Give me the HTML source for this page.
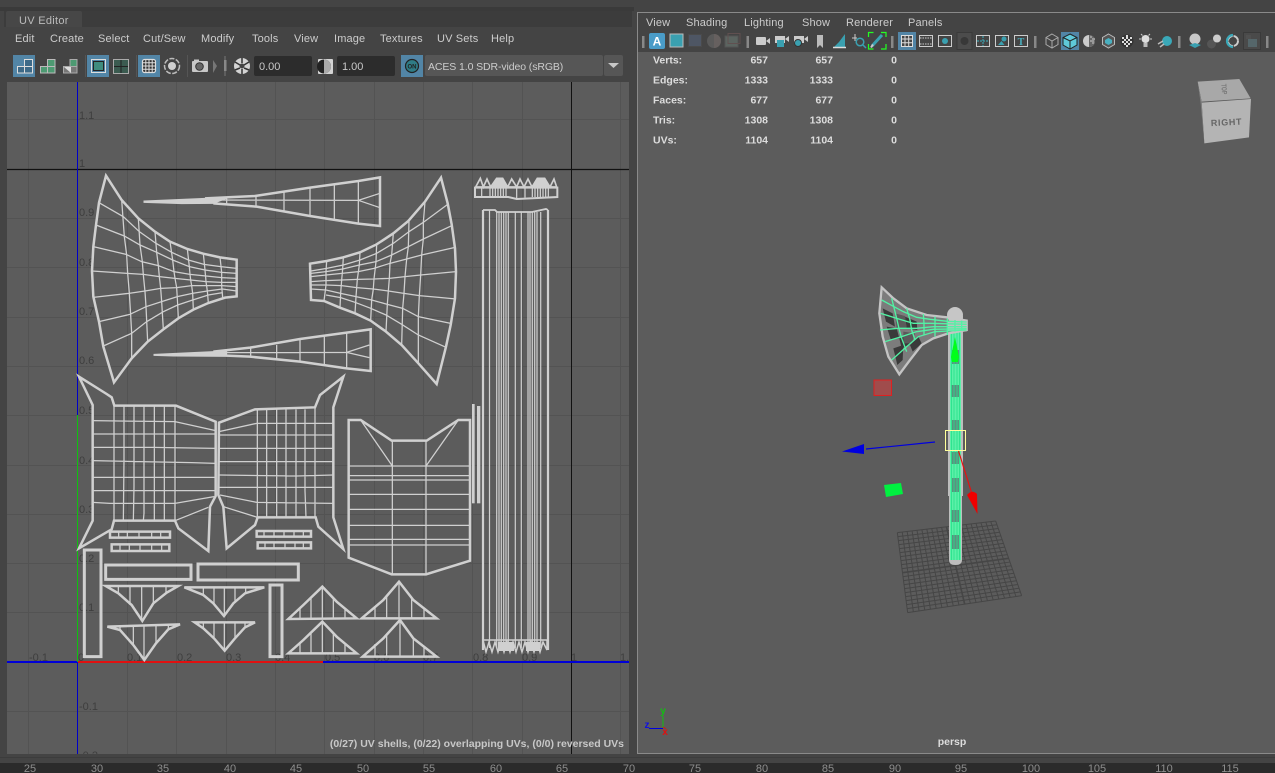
<!DOCTYPE html>
<html><head><meta charset="utf-8"><style>
html,body{margin:0;padding:0;background:#444;width:1275px;height:773px;overflow:hidden}
svg{position:absolute;left:0;top:0;display:block}
text{font-family:"Liberation Sans",sans-serif}
.m{font-size:11px;fill:#ccc;letter-spacing:.15px}
.l{font-size:11px;fill:#3e3e3e}
.h{font-size:10.5px;font-weight:bold;fill:#ddd}
.t{font-size:11px;fill:#8e8e8e;text-anchor:middle}
.o{fill:none;stroke:#d0d0d0;stroke-width:7.500;stroke-linejoin:miter}
.i{fill:none;stroke:#d0d0d0;stroke-width:3.800}
</style></head><body>
<svg width="1275" height="773" viewBox="0 0 1275 773">
<rect width="1275" height="773" fill="#444"/>
<rect x="0" y="7" width="634" height="4" fill="#3a3a3a"/>
<rect x="4" y="11" width="628" height="16" fill="#3c3c3c"/>
<path d="M6 27V13q0-2 2-2h72q2 0 2 2v14z" fill="#474747"/>
<text x="19" y="24" fill="#bbb" letter-spacing=".3" style="font-size:11px">UV Editor</text>
<rect x="4" y="27" width="628" height="55" fill="#444"/>
<g class="menu">
<text class="m" x="15" y="42">Edit</text><text class="m" x="50" y="42">Create</text><text class="m" x="98" y="42">Select</text><text class="m" x="143" y="42">Cut/Sew</text><text class="m" x="201" y="42">Modify</text><text class="m" x="252" y="42">Tools</text><text class="m" x="294" y="42">View</text><text class="m" x="334" y="42">Image</text><text class="m" x="380" y="42">Textures</text><text class="m" x="437" y="42">UV Sets</text><text class="m" x="491" y="42">Help</text>
</g>
<!-- left toolbar -->
<rect x="13" y="55" width="22" height="22" fill="#5285a6"/>
<g fill="#3d6a88" stroke="#ddd"><rect x="24.500" y="59.500" width="8" height="7"/><rect x="17.500" y="66.500" width="7" height="6.500"/><rect x="24.500" y="66.500" width="8" height="6.500"/></g>
<g fill="#4d9a72" stroke="#bbb"><rect x="47.500" y="59.500" width="7.500" height="7"/><rect x="40.500" y="66.500" width="7" height="6.500"/><rect x="47.500" y="66.500" width="7.500" height="6.500"/></g>
<rect x="70" y="59.500" width="7" height="7" fill="#4d9a72" stroke="#aaa"/><rect x="63.500" y="66.500" width="13.500" height="6.500" fill="#777" stroke="#aaa"/><path d="M64 67h7v6z" fill="#ddd"/>
<rect x="85" y="55" width="1" height="22" fill="#555"/>
<rect x="87" y="55" width="22" height="22" fill="#5285a6"/>
<rect x="91.500" y="59.500" width="14" height="13" fill="none" stroke="#ddd"/><rect x="93.500" y="61.500" width="10" height="9" fill="#3f8c7e" stroke="#222"/>
<rect x="113.500" y="59.500" width="15" height="14" fill="#3b5b50" stroke="#aaa"/><path d="M121 60v13M114 66.500h14" stroke="#222"/>
<rect x="136" y="55" width="1" height="22" fill="#555"/>
<rect x="138" y="55" width="22" height="22" fill="#5285a6"/>
<rect x="142.500" y="59.500" width="13" height="13" rx="2" fill="#333" stroke="#ddd" stroke-width="1.200"/><path d="M145.800 59.500v13M149 59.500v13M152.200 59.500v13M142.500 62.800h13M142.500 66h13M142.500 69.200h13" stroke="#ddd"/>
<circle cx="172" cy="66" r="7.500" fill="none" stroke="#bbb" stroke-width="1.500" stroke-dasharray="5 1.500"/><circle cx="172" cy="66" r="4" fill="#d0d0d0"/>
<rect x="187" y="55" width="1" height="22" fill="#555"/>
<rect x="192" y="61" width="16" height="11" rx="1" fill="#c8c8c8"/><rect x="194" y="59.500" width="5" height="2" fill="#c8c8c8"/><circle cx="199.500" cy="66.500" r="3.800" fill="#666" stroke="#333"/>
<path d="M213 60l4 6-4 7z" fill="#777"/>
<rect x="224.500" y="56" width="1" height="20" fill="#777"/><rect x="224" y="60" width="2.500" height="11" fill="#888"/>
<circle cx="242" cy="66" r="8" fill="#d4d4d4"/><path d="M242 58v5M249 62l-5 3M249 70l-5-2M242 74v-5M235 70l5-2M235 62l5 3" stroke="#333" stroke-width="1.500"/><circle cx="242" cy="66" r="2.500" fill="#444"/>
<rect x="254" y="56" width="58" height="20" rx="2" fill="#2c2c2c"/>
<text x="259" y="70" fill="#c8c8c8" style="font-size:11px">0.00</text>
<rect x="318" y="59" width="15" height="15" rx="1" fill="#d4d4d4"/><circle cx="324" cy="66.500" r="7" fill="#222"/><path d="M324 59.500a7 7 0 0 1 0 14z" fill="#aaa"/>
<rect x="337" y="56" width="58" height="20" rx="2" fill="#2c2c2c"/>
<text x="342" y="70" fill="#c8c8c8" style="font-size:11px">1.00</text>
<rect x="401" y="55" width="22" height="22" fill="#5285a6"/>
<circle cx="412" cy="66" r="6.500" fill="#2f7c86" stroke="#222" stroke-width="1.200"/><text x="412" y="68.300" font-weight="bold" fill="#222" text-anchor="middle" style="font-size:6px">ON</text>
<rect x="425" y="55" width="178" height="21" rx="2" fill="#565656"/><rect x="604" y="55" width="19" height="21" rx="2" fill="#565656"/>
<text x="428" y="70" fill="#ccc" style="font-size:10.500px;letter-spacing:-.1px">ACES 1.0 SDR-video (sRGB)</text>
<path d="M608 63h11l-5.500 5z" fill="#c8c8c8"/>

<!-- UV viewport -->
<clipPath id="uv"><rect x="7" y="82" width="622" height="672"/></clipPath>
<rect x="7" y="82" width="622" height="672" fill="#5c5c5c"/>
<g clip-path="url(#uv)">
<path d="M28.500 82V754M127.500 82V754M176.500 82V754M226.500 82V754M275.500 82V754M324.500 82V754M374.500 82V754M423.500 82V754M472.500 82V754M522.500 82V754M620.500 82V754M7 119.500H629M7 218.500H629M7 267.500H629M7 317.500H629M7 366.500H629M7 415.500H629M7 465.500H629M7 514.500H629M7 563.500H629M7 612.500H629M7 711.500H629" stroke="#535353" stroke-width="1" fill="none"/>
<path d="M7 169.500H629" stroke="#111" stroke-width="1.300"/>
<path d="M571.500 82V754" stroke="#111" stroke-width="1"/>
<g class="labels">
<text class="l" x="79" y="119">1.1</text><text class="l" x="79" y="167">1</text><text class="l" x="79" y="216">0.9</text><text class="l" x="79" y="266">0.8</text><text class="l" x="79" y="315">0.7</text><text class="l" x="79" y="364">0.6</text><text class="l" x="79" y="414">0.5</text><text class="l" x="79" y="464">0.4</text><text class="l" x="79" y="513">0.3</text><text class="l" x="79" y="562">0.2</text><text class="l" x="79" y="611">0.1</text><text class="l" x="79" y="710">-0.1</text><text class="l" x="79" y="759">-0.2</text>
<text class="l" x="29" y="661">-0.1</text><text class="l" x="78" y="661">0</text><text class="l" x="127" y="661">0.1</text><text class="l" x="177" y="661">0.2</text><text class="l" x="226" y="661">0.3</text><text class="l" x="275" y="661">0.4</text><text class="l" x="325" y="661">0.5</text><text class="l" x="374" y="661">0.6</text><text class="l" x="423" y="661">0.7</text><text class="l" x="473" y="661">0.8</text><text class="l" x="522" y="661">0.9</text><text class="l" x="571" y="661">1</text><text class="l" x="620" y="661">1.1</text>
</g>
<path d="M7 662H629" stroke="#0000d8" stroke-width="2"/>
<path d="M78 662H323" stroke="#e01010" stroke-width="2"/>
<path d="M77.500 82V415M77.500 663V754" stroke="#0000c8" stroke-width="1"/>
<path d="M77.500 415V662" stroke="#10c010" stroke-width="1"/>
</g>

<!-- left fan, top wedge, bottom wedge -->
<g transform="translate(80,165) scale(.33333)">
<path class="o" d="M78 32L125 105 175 160 225 200 270 230 322 252 370 266 420 277 470 284V394L435 398 385 414 340 434 295 460 250 493 203 530 155 580 102 652 70 545 57 470 40 395 36 318 40 245 48 180 57 113z"/>
<path class="i" d="M57 113L130 155 178 200 228 235 275 262 325 285 372 298 422 305 470 310M48 180L133 213 180 240 230 262 278 285 328 305 375 315 425 322 470 325M40 245L138 268 185 290 235 302 282 320 330 328 378 333 425 338 470 340M36 318L142 325 190 328 238 335 285 340 332 345 378 350 425 352 470 352M40 397L147 385 195 378 242 370 290 368 335 362 380 362 425 362 470 365M57 470L150 448 198 425 245 410 292 395 337 385 382 378 427 372 470 378M70 543L155 505 200 470 250 440 293 420 338 405 385 390 428 383"/>
<path class="i" d="M125 105L133 215 140 270 143 325 148 385 152 450 155 505 155 580M175 160L180 240 187 290 190 330 195 380 198 425 203 530M225 200L230 262 235 302 238 335 242 370 245 410 250 493M270 230L278 285 282 320 285 340 290 368 293 420 295 460M322 252L328 305 330 328 332 345 335 362 338 385 340 434M370 266L375 315 378 350 382 378 385 414M420 277L425 322 425 362 428 398"/>
<path class="o" style="fill:#d0d0d0;stroke-width:3" d="M192 108L375 100 440 100 400 115 305 116 192 112z"/>
<path class="o" d="M375 100L525 93 690 68 835 48 900 37V183L835 176 690 153 530 125 400 115"/>
<path class="i" d="M440 100V115M528 93V125M612 82V140M690 70V155M763 58V163M835 48V178M375 105L835 106 900 85M835 106L900 128"/>
<path class="o" style="fill:#d0d0d0;stroke-width:3" d="M222 568L400 560 440 560V574L280 573 222 571z"/>
<path class="o" d="M400 560L510 548 660 522 800 503 872 493V618L800 610 660 590 510 575 440 572"/>
<path class="i" d="M512 548V575M590 540V585M660 522V590M733 515V603M800 503V612M440 563L800 562 868 540M800 562L868 578"/>
</g>

<!-- right fan + crown + column tops -->
<g transform="translate(300,165) scale(.33333)">
<path class="o" d="M423 38L375 110 325 168 280 205 230 238 180 262 130 277 80 288 30 296 33 405 72 408 120 428 165 445 212 467 258 500 305 540 355 595 410 657 438 545 452 480 465 400 468 320 465 250 455 178 443 115z"/>
<path class="i" d="M443 118L370 172 327 200 280 235 230 265 180 285 130 300 80 310 33 318M455 182L370 222 325 245 275 270 228 290 178 300 128 312 78 320 33 325M462 248L365 270 320 282 270 295 222 310 175 320 125 325 78 330 33 335M468 320L362 330 315 335 268 340 222 342 172 343 125 345 78 347 33 350M468 402L425 398 358 392 312 385 265 378 220 372 170 368 125 362 78 360 33 360M452 475L355 455 308 430 262 418 215 405 168 395 122 385 78 375 33 372M438 547L355 510 305 478 258 450 212 430 165 412 122 398 78 390"/>
<path class="i" d="M375 110L370 172 370 222 365 270 362 330 358 392 355 455 355 595M327 168L325 245 320 282 315 335 312 385 308 430 305 540M280 205L275 270 270 295 268 340 265 378 262 418 258 500M230 238L228 290 222 342 220 372 215 405 212 467M180 262L178 300 172 343 170 368 168 395 165 445M130 277L128 312 125 345 122 385 120 428M80 288L78 320 78 360 72 408"/>
<!-- crown -->
<path class="o" d="M525 96V68H772V96L690 100 650 102 625 96z" style="stroke-width:6"/>
<path d="M527 66L541 40 550 66 561 42 572 66 590 40 608 40 623 66 635 42 650 66 660 42 672 66 684 42 696 66 712 40 734 40 750 66 762 42 770 66z" fill="none" stroke="#d0d0d0" stroke-width="5"/>
<path d="M575 66L590 40H608L623 66zM696 66L712 40H734L750 66z" fill="#d0d0d0"/>
<path class="i" d="M545 66V94M570 66V94M578 66V94M586 66V94M594 66V94M602 66V94M610 66V94M618 66V94M650 66V100M675 66V98M697 66V96M705 66V96M713 66V96M721 66V96M729 66V96M737 66V96M745 66V96"/>
</g>

<!-- middle shells -->
<g transform="translate(70,370) scale(.33333)">
<path class="o" d="M27 20L110 72 125 82 133 107H318L437 155V378L420 410 415 543 325 475 315 452H132L125 478 27 535 68 452V105z"/>
<path class="i" d="M132 107V452M162 107V270L160 452M192 107V350L190 452M222 107V430L220 452M253 107V452M283 107V452M315 107V452M68 152L315 155 437 182M68 192H437M68 232H250L437 235M68 272L365 278 437 280M68 322H437M68 362H437M68 397L120 400H315L432 380M315 452L415 412"/>
<path class="o" d="M820 20L750 75 735 112 555 118 447 158 445 375 460 410 470 535 555 465 563 442H737L745 470 820 537 790 442V112z"/>
<path class="i" d="M562 118V442M590 118V442M620 118V442M648 118V442M678 118V442M705 118V362L708 442M735 112V442M447 185L560 160 790 160M447 195H790M447 235H790M447 275H790M447 315L680 318 790 315M447 352H790M450 375L560 397 790 400M460 410L562 442"/>
<path class="o" d="M120 485H300V503H120zM125 523H298V543H125zM560 483H723V500H560zM563 517H723V535H563z"/>
<path class="i" d="M146 485V503M172 485V503M207 485V503M245 485V503M272 485V503M150 523V543M178 523V543M210 523V543M245 523V543M275 523V543M582 483V500M612 483V500M642 483V500M672 483V500M700 483V500M585 517V535M612 517V535M645 517V535M675 517V535M700 517V535"/>
</g>

<!-- strips + bottom fans -->
<g transform="translate(70,540) scale(.33333)">
<path d="M43 30H93V350H43zM107 75H363V118H107zM384 72H685V120H384zM600 135H636V350H600z" fill="none" stroke="#d0d0d0" stroke-width="9"/>
<path class="o" d="M107 138H325L290 158 250 190 217 243 185 195 145 160z"/>
<path class="i" d="M145 138V160M180 138V195M215 138V243M250 138V190M288 138V158"/>
<path class="o" d="M343 142H583L525 160 490 190 462 228 430 190 400 165z"/>
<path class="i" d="M400 142V165M432 142V190M463 142V228M495 142V188M527 142V160"/>
<path class="o" d="M112 260L330 253 295 268 258 310 223 360 190 315 150 270z"/>
<path class="i" d="M150 258V270M190 258V315M222 255V360M258 255V310M295 255V268"/>
<path class="o" d="M374 247H555L525 262 495 295 464 332 432 295 400 265z"/>
<path class="i" d="M400 247V265M432 247V295M463 247V332M495 247V295M525 247V262"/>
<path class="o" d="M757 140L800 185 860 235 655 237 700 195z"/>
<path class="i" d="M690 205V236M723 170V236M757 140V236M790 175V236M825 208V236"/>
<path class="o" d="M987 125L1030 180 1100 235H875L940 180z"/>
<path class="i" d="M915 198V235M950 170V235M987 125V235M1025 175V235M1062 205V235"/>
<path class="o" d="M757 245L800 290 860 340H655L700 300z"/>
<path class="i" d="M690 310V340M723 275V340M757 245V340M790 280V340M825 312V340"/>
<path class="o" d="M990 240L1030 295 1100 350H878L940 295z"/>
<path class="i" d="M915 312V350M950 285V350M990 240V350M1030 295V350M1062 322V350"/>
</g>

<!-- vertical shell -->
<g transform="translate(340,390) scale(.33333)">
<path class="o" d="M26 90H62L155 152H260L355 90H390V512L258 553H155L26 503z"/>
<path class="i" d="M157 152V553M258 152V553M62 90L157 228M355 90L258 228M28 228H390M28 257H390M28 270H390M28 313H390M28 358H390M28 406H390M28 448H390M28 465H390"/>
<rect x="396" y="42" width="8" height="298" fill="#d0d0d0"/><rect x="411" y="48" width="10" height="292" fill="#d0d0d0"/>
</g>
<path d="M483 210V650M548 210V650" stroke="#d0d0d0" stroke-width="2.200" fill="none"/>
<path d="M483 210H495L497 212H532L546 209 548 210" stroke="#d0d0d0" stroke-width="1.800" fill="none"/>
<path d="M489.500 210V648M496.700 212V648M499 212V648M501.300 212V648M503.700 212V648M506 212V648M508.300 212V648M515.300 212V648M521.300 212V648M528 212V648M530 212V648M532.300 212V648M534.700 212V648M537 212V648M540.700 212V648" stroke="#d0d0d0" stroke-width="1.200" fill="none"/>
<path d="M483 640L486 652 489 642 492 652 495 642 498 652 501 642 504 652 507 642 510 652 513 642 516 652 519 642 522 652 525 642 528 652 531 642 534 652 537 642 540 652 543 642 547 650V640z" fill="none" stroke="#d0d0d0" stroke-width="1.500"/>
<path d="M498 642H514V651H498zM526 642H540V651H526z" fill="#d0d0d0"/>
<text x="624" y="747" text-anchor="end" font-weight="bold" fill="#c8c8c8" style="font-size:10.500px">(0/27) UV shells, (0/22) overlapping UVs, (0/0) reversed UVs</text>

<!-- right panel -->
<rect x="637" y="12" width="638" height="741" fill="#444"/>
<rect x="638" y="52" width="637" height="701" fill="#5c5c5c"/>
<path d="M637 12.500H1275M637.500 12V754M637 753.500H1275" stroke="#8a8a8a" stroke-width="1" fill="none"/>
<text class="m" x="646" y="26">View</text><text class="m" x="686" y="26">Shading</text><text class="m" x="744" y="26">Lighting</text><text class="m" x="802" y="26">Show</text><text class="m" x="846" y="26">Renderer</text><text class="m" x="908" y="26">Panels</text>

<!-- HUD -->
<g>
<text class="h" x="653" y="63.500">Verts:</text><text class="h" x="768" y="63.500" text-anchor="end">657</text><text class="h" x="833" y="63.500" text-anchor="end">657</text><text class="h" x="897" y="63.500" text-anchor="end">0</text>
<text class="h" x="653" y="83.500">Edges:</text><text class="h" x="768" y="83.500" text-anchor="end">1333</text><text class="h" x="833" y="83.500" text-anchor="end">1333</text><text class="h" x="897" y="83.500" text-anchor="end">0</text>
<text class="h" x="653" y="103.500">Faces:</text><text class="h" x="768" y="103.500" text-anchor="end">677</text><text class="h" x="833" y="103.500" text-anchor="end">677</text><text class="h" x="897" y="103.500" text-anchor="end">0</text>
<text class="h" x="653" y="123.500">Tris:</text><text class="h" x="768" y="123.500" text-anchor="end">1308</text><text class="h" x="833" y="123.500" text-anchor="end">1308</text><text class="h" x="897" y="123.500" text-anchor="end">0</text>
<text class="h" x="653" y="143.500">UVs:</text><text class="h" x="768" y="143.500" text-anchor="end">1104</text><text class="h" x="833" y="143.500" text-anchor="end">1104</text><text class="h" x="897" y="143.500" text-anchor="end">0</text>
</g>

<!-- right toolbar -->
<g fill="#888"><rect x="642" y="36" width="2.500" height="12"/><rect x="746.500" y="36" width="2.500" height="12"/><rect x="891" y="36" width="2.500" height="12"/><rect x="1034" y="36" width="2.500" height="12"/><rect x="1178" y="36" width="2.500" height="12"/><rect x="1266" y="36" width="2.500" height="12"/></g>
<rect x="649" y="33" width="16" height="16" rx="2" fill="#4a9cc8"/><text x="657" y="45.500" text-anchor="middle" font-weight="bold" fill="#fff" style="font-size:12px">A</text>
<rect x="670" y="34" width="13" height="13" fill="#3aa0b0" stroke="#bbb" stroke-width="1"/>
<rect x="688.500" y="34.500" width="13" height="12" fill="#4e5664" stroke="#4a4a4a"/>
<circle cx="714" cy="41" r="7" fill="#5a5a5a"/><path d="M714 34a7 7 0 0 1 0 14z" fill="#66605f"/>
<rect x="725" y="36" width="13" height="11" fill="#5b6460" stroke="#555"/><rect x="728" y="33.500" width="12" height="10" fill="none" stroke="#605050"/>
<rect x="756" y="37" width="10" height="8" rx="1" fill="#ccc"/><path d="M766 41l4-3v6z" fill="#ccc"/>
<rect x="775" y="36" width="10" height="7" fill="#ccc"/><path d="M785 39l4-3v6z" fill="#ccc"/><rect x="777" y="40" width="7" height="7" fill="#3aa0b0"/>
<rect x="794" y="36" width="10" height="7" fill="#ccc"/><path d="M804 39l4-3v6z" fill="#ccc"/><circle cx="798" cy="43" r="3.500" fill="#3aa0b0" stroke="#333"/>
<path d="M817 35h6v13l-3-3-3 3z" fill="#bbb"/>
<path d="M834 47l5-5 6-8v13z" fill="#3aa0b0"/><path d="M833 47.500h13" stroke="#ddd" stroke-width="1.500"/>
<circle cx="860" cy="42" r="3.800" fill="none" stroke="#3aa0b0" stroke-width="1.500"/><path d="M863 45l3 3" stroke="#3aa0b0" stroke-width="1.500"/><path d="M852 38h5M855 34v7" stroke="#ccc"/>
<path d="M868.500 37v-4.500h5M881 32.500h5v4.500M868.500 44v5h5M881 49h5v-5" fill="none" stroke="#22ff22" stroke-width="1.200"/>
<path d="M872 46l10-11" stroke="#3aa0b0" stroke-width="3"/><path d="M871 47.500l2-3" stroke="#ccc" stroke-width="2"/>
<rect x="898" y="32" width="18" height="18" fill="#5285a6"/><rect x="901.500" y="35.500" width="11" height="11" fill="#444" stroke="#ddd"/><path d="M905 35.500v11M908.700 35.500v11M901.500 39h11M901.500 42.800h11" stroke="#ddd"/>
<rect x="919.500" y="35.500" width="13" height="11" fill="#444" stroke="#ccc"/><path d="M920 38h12M920 44h12" stroke="#ccc" stroke-dasharray="1.500 1"/>
<rect x="938.500" y="35.500" width="13" height="11" fill="#444" stroke="#ccc"/><circle cx="945" cy="41" r="3" fill="#3aa0b0"/>
<rect x="957" y="32.500" width="15" height="17" fill="#4c4c4c" stroke="#3a3a3a"/><circle cx="964.500" cy="41" r="4" fill="#383838"/>
<rect x="976.500" y="35.500" width="13" height="11" fill="#444" stroke="#ccc"/><path d="M983 36v10M977 41h12" stroke="#3ab0c0" stroke-dasharray="2 1"/>
<rect x="995.500" y="35.500" width="13" height="11" fill="#444" stroke="#ccc"/><path d="M998 45l3.500-4 3 4z" fill="#3aa0b0"/><circle cx="1004" cy="39" r="2.500" fill="#3aa0b0"/>
<rect x="1014.500" y="35.500" width="13" height="11" fill="#444" stroke="#ccc"/><text x="1021" y="45" text-anchor="middle" font-weight="bold" fill="#4ab0c0" style="font-size:10px;font-family:'Liberation Serif',serif">T</text>
<path d="M1052 34l6 3.500v7l-6 3.500-6-3.500v-7zM1046 37.500l6 3.500 6-3.500M1052 41v7" fill="none" stroke="#aaa"/>
<rect x="1061" y="32" width="18" height="18" fill="#5285a6"/><path d="M1070 34l7 3.500v7.500l-7 4-7-4v-7.500z" fill="#5fc8d8" stroke="#222"/><path d="M1063 37.500l7 3.500 7-3.500M1070 41v8" fill="none" stroke="#222"/>
<circle cx="1089" cy="41" r="6" fill="#ccc"/><path d="M1089 35a6 6 0 0 1 0 12z" fill="#666"/><path d="M1090 37h2M1092 39h3M1090 41h4M1092 43h2" stroke="#ccc"/>
<path d="M1108.500 34l6 3.500v7l-6 3.500-6-3.500v-7z" fill="#555" stroke="#bbb"/><path d="M1108.500 38l3.500 2v3l-3.500 2-3.500-2v-3z" fill="#4ab0c0"/>
<circle cx="1127" cy="41" r="6.500" fill="#333"/><path d="M1122 37h2v2h-2zM1126 37h2v2h-2zM1130 37h2v2h-2zM1124 39h2v2h-2zM1128 39h2v2h-2zM1122 41h2v2h-2zM1126 41h2v2h-2zM1130 41h2v2h-2zM1124 43h2v2h-2zM1128 43h2v2h-2zM1126 35h2v2h-2zM1126 45h2v2h-2z" fill="#ddd"/>
<circle cx="1145.500" cy="39" r="4" fill="#ddd"/><rect x="1143.500" y="43" width="4" height="4" fill="#bbb"/><path d="M1139 39h2M1150 39h2M1141 34l1.500 1.500M1150 34l-1.500 1.500" stroke="#ccc"/>
<circle cx="1167" cy="41" r="5" fill="#3aa8b8"/><path d="M1158 44l5-3M1160 47l4-3" stroke="#bbb" stroke-width="1.500"/>
<circle cx="1195" cy="39" r="5.500" fill="#c8c8c8"/><path d="M1189 45l6-2 6 2-6 3z" fill="#3aa0b0"/>
<circle cx="1211.500" cy="44" r="4.500" fill="#555"/><circle cx="1217" cy="38.500" r="4" fill="#ccc"/>
<circle cx="1233" cy="41" r="5" fill="none" stroke="#ccc" stroke-width="2" stroke-dasharray="7 1"/><path d="M1233 35a6 6 0 0 0 0 12" fill="none" stroke="#3aa8b8" stroke-width="2.200"/>
<rect x="1243.500" y="32.500" width="17" height="17" fill="#4a4a4a" stroke="#3a3a3a"/><rect x="1248" y="39" width="9" height="8" fill="#55666a"/><rect x="1246" y="35" width="5" height="4" fill="#505050"/>

<!-- view cube -->
<g transform="translate(955,0) scale(.33333)">
<path d="M728 245L853 237 887 295 740 305z" fill="#a8a8a8"/>
<path d="M740 308L888 297 882 412 748 430z" fill="#b4b4b4"/>
<path d="M728 245L740 305 748 430 737 310z" fill="#808080"/>
<text x="815" y="376" text-anchor="middle" font-weight="bold" fill="#666" transform="rotate(-3 815 376)" style="font-size:27px;letter-spacing:2px">RIGHT</text>
<text x="0" y="0" text-anchor="middle" font-weight="bold" fill="#777" transform="translate(800,268) rotate(85) scale(.7,1)" style="font-size:22px">TOP</text>
</g>

<!-- ground grid -->
<g transform="translate(830,420) scale(.33333)" fill="none" stroke="#464646" stroke-width="3">
<path d="M202 338L233 578M216.750 336.250L250.100 575.450M231.500 334.500L267.200 572.900M246.250 332.750L284.300 570.350M261 331L301.400 567.800M275.750 329.250L318.500 565.250M290.500 327.500L335.600 562.700M305.250 325.750L352.700 560.150M320 324L369.800 557.600M334.750 322.250L386.900 555.050M364.250 318.750L421.100 549.950M379 317L438.200 547.400M393.750 315.250L455.300 544.850M408.500 313.500L472.400 542.300M423.250 311.750L489.500 539.750M438 310L506.600 537.200M452.750 308.250L523.700 534.650M467.500 306.500L540.800 532.100M482.250 304.750L557.900 529.550M497 303L575 527"/>
<path d="M202 338L497 303M203.550 350L500.900 314.200M205.100 362L504.800 325.400M206.650 374L508.700 336.600M208.200 386L512.600 347.800M209.750 398L516.500 359M211.300 410L520.400 370.200M212.850 422L524.300 381.400M214.400 434L528.200 392.600M215.950 446L532.100 403.800M219.050 470L539.900 426.200M220.600 482L543.800 437.400M222.150 494L547.700 448.600M223.700 506L551.600 459.800M225.250 518L555.500 471M226.800 530L559.400 482.200M228.350 542L563.300 493.400M229.900 554L567.200 504.600M231.450 566L571.100 515.800M233 578L575 527"/>
<path d="M349.500 320.500L404 552.500M217.500 458L536 415" stroke-width="5"/>
</g>

<!-- axe handle -->
<rect x="948" y="316" width="15" height="180" fill="#bdbdbd"/>
<path d="M949 496H962V560Q962 565 955.500 565 949 565 949 560z" fill="#bdbdbd"/>
<rect x="950" y="320" width="11" height="240" fill="#5cf0a8"/>
<path d="M952 350h7v14h-7zM951 385h8v12h-8zM952 420h7v10h-7zM951 452h8v12h-8zM952 478h7v14h-7zM951 510h8v12h-8zM952 535h7v14h-7z" fill="#5d9080"/>
<path d="M951.500 320V560M954 320V560M957 320V560M959.500 320V560" stroke="#25e08a" stroke-width=".8"/>
<path d="M955 337l-4 20 1 5h6l1-5z" fill="#00ff1a"/>

<!-- axe bit -->
<g transform="translate(860,280) scale(.33333)">
<path d="M65 22L100 55 140 85 200 105 260 112 320 122V150L265 160 220 175 185 195 150 240 118 283 85 230 68 170 58 100z" fill="#7c7c7c" stroke="#c4c4c4" stroke-width="7"/>
<path d="M68 85L98 100 105 140 78 125zM80 140L110 145 118 175 92 178zM100 205L130 195 128 240 112 255zM135 110L170 125 172 150 140 145zM150 195L175 170 185 190 158 215zM118 175L150 165 150 195 125 205z" fill="#3a3a3a"/>
<path d="M105 100L135 108 140 145 110 145zM130 155L165 160 155 190 130 190z" fill="#5a5a5a"/>
<circle cx="285" cy="105" r="24" fill="#c6c6c6"/>
<rect x="262" y="122" width="58" height="32" fill="#c0c0c0"/>
<g fill="none" stroke="#52f2a4" stroke-width="4">
<path d="M65 60L130 95 170 112 210 118 262 124M320 126L262 124M62 100L110 115 160 130 210 130 320 133M60 150L115 145 170 145 220 140 320 140M75 185L125 170 170 155 220 148 320 146M95 240L140 200 175 170 225 155 320 150"/>
<path d="M95 55L110 115 118 150 125 175 140 215M140 85L150 120 155 150 165 180M190 102L192 130 192 165M225 110V170M262 115V165M285 120V155M305 122V150"/>
</g>
</g>

<!-- manipulators -->
<rect x="874" y="380" width="17.500" height="15.500" fill="#a04c4c" stroke="#e02020" stroke-width="1"/>
<path d="M884 485L901 483 903 494 886 497z" fill="#00f040"/>
<path d="M935 442L866 449" stroke="#0000e0" stroke-width="1.200"/>
<path d="M842 451.500L864 444V454z" fill="#0000e0"/>
<path d="M958.500 451L972 494" stroke="#e81010" stroke-width="1.200"/>
<path d="M967 495Q972 489 977 494L977.500 514z" fill="#f00000"/>
<rect x="945.500" y="430.500" width="20" height="20" fill="none" stroke="#ffff99" stroke-width="1"/>

<!-- axis gizmo -->
<path d="M663 716V728" stroke="#10c010"/><path d="M649 728.500H663" stroke="#0000e0"/><path d="M663 727l3 2" stroke="#e01010"/>
<text x="663" y="714" text-anchor="middle" font-weight="bold" fill="#10c010" style="font-size:10px">y</text>
<text x="647" y="728" text-anchor="middle" font-weight="bold" fill="#1010e0" style="font-size:10px">z</text>
<text x="665" y="735" text-anchor="middle" font-weight="bold" fill="#e01010" style="font-size:10px">x</text>
<text x="952" y="745" text-anchor="middle" font-weight="bold" fill="#ddd" style="font-size:10.500px">persp</text>

<!-- bottom -->
<rect x="0" y="754" width="1275" height="9" fill="#444"/>
<rect x="0" y="757" width="1275" height="1" fill="#3c3c3c"/>
<rect x="0" y="763" width="1275" height="10" fill="#2b2b2b"/>
<g>
<text class="t" x="30" y="772">25</text><text class="t" x="97" y="772">30</text><text class="t" x="163" y="772">35</text><text class="t" x="230" y="772">40</text><text class="t" x="296" y="772">45</text><text class="t" x="363" y="772">50</text><text class="t" x="429" y="772">55</text><text class="t" x="496" y="772">60</text><text class="t" x="562" y="772">65</text><text class="t" x="629" y="772">70</text><text class="t" x="695" y="772">75</text><text class="t" x="762" y="772">80</text><text class="t" x="828" y="772">85</text><text class="t" x="895" y="772">90</text><text class="t" x="961" y="772">95</text><text class="t" x="1031" y="772">100</text><text class="t" x="1097" y="772">105</text><text class="t" x="1164" y="772">110</text><text class="t" x="1230" y="772">115</text>
</g>
</svg>
</body></html>
